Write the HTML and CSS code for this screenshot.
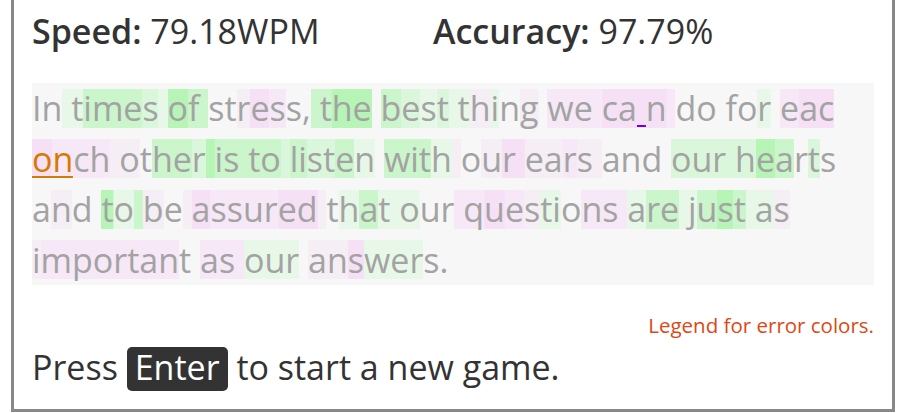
FILE: index.html
```html
<!DOCTYPE html>
<html lang="en">
<head>
<meta charset="utf-8">
<title>Typing game</title>
<link rel="stylesheet" href="styles.css">
</head>
<body>
<div class="game">
  <div class="stats">
    <div class="stat"><b>Speed:</b> 79.18WPM</div>
    <div class="stat"><b>Accuracy:</b> 97.79%</div>
  </div>
  <div class="passage">
<div class="ln">In<span class="g0"> t</span><span class="g2">ime</span><span class="g1">s</span><span class="g0"> </span><span class="g3">o</span><span class="g2">f </span>st<span class="p0">r</span><span class="p2">e</span><span class="p1">s</span>s,<span class="g2"> t</span><span class="g3">he</span> <span class="g2">b</span><span class="g1">e</span><span class="g0">s</span><span class="g1">t</span><span class="g0"> t</span><span class="p0">h</span><span class="g0">i</span>n<span class="p0">g</span> <span class="p1">we </span><span class="p2">ca</span><span class="p2 cur"> </span><span class="p2">n</span><span class="p1"> </span>do fo<span class="g0">r</span> <span class="p1">e</span><span class="p2">ac</span></div>
<div class="ln"><span class="p2 ex">o</span><span class="p1 ex">n</span><span class="p1">ch</span><span class="p0"> o</span>t<span class="g2">he</span><span class="g1">r</span><span class="g3"> </span><span class="g2">is to</span><span class="g1"> </span><span class="g2">li</span><span class="g1">st</span><span class="g2">e</span><span class="g0">n</span> <span class="g2">wit</span><span class="g0">h</span><span class="p0"> </span>o<span class="p0">u</span><span class="p2">r </span><span class="p0">ea</span><span class="p1">r</span><span class="p0">s </span>and <span class="g1">our h</span><span class="g3">e</span><span class="g2">a</span>r<span class="g1">t</span>s</div>
<div class="ln">a<span class="p0">n</span>d <span class="g3">t</span><span class="g0">o</span><span class="g2"> </span><span class="p0">b</span>e<span class="p0"> </span><span class="p2">a</span><span class="p1">ssur</span><span class="p2">ed</span><span class="p0"> </span>t<span class="g0">h</span><span class="g2">a</span><span class="g0">t o</span>ur<span class="p1"> q</span><span class="p2">u</span><span class="p1">e</span><span class="p0">s</span><span class="g0">ti</span>o<span class="p1">ns </span><span class="g0">a</span><span class="g2">re</span><span class="g0"> j</span><span class="g2">u</span><span class="g3">s</span><span class="g2">t</span><span class="g0"> a</span><span class="p0">s</span></div>
<div class="ln"><span class="p0">i</span><span class="p1">mportan</span>t <span class="p1">as </span><span class="g0">our</span> <span class="p0">an</span><span class="p2">s</span><span class="g0">wer</span>s.</div>
  </div>
  <div class="legend">Legend for error colors.</div>
  <div class="restart">Press <kbd class="key">Enter</kbd> to start a new game.</div>
</div>
</body>
</html>
```
FILE: styles.css
```css
body {
  margin: 0;
  background: #fff;
  font-family: "Open Sans", "Noto Sans", sans-serif;
}

.game {
  margin-left: 11px;
  width: 884px;
  box-sizing: border-box;
  border: 3px solid #888;
  border-top: none;
  padding: 10px 18px 17px;
  color: #333;
}

.stats {
  display: grid;
  grid-template-columns: 401px auto;
  font-size: 34px;
  line-height: 42px;
}

.stat b {
  font-weight: 600;
}

.passage {
  margin-top: 31px;
  background: #f7f7f7;
  color: #a3a3a3;
  font-size: 34px;
}

.ln {
  height: 50.5px;
  line-height: 50.5px;
  white-space: pre;
}

.g0, .g1, .g2, .g3, .p0, .p1, .p2 {
  background-image: linear-gradient(var(--c), var(--c));
  background-size: 100% 39px;
  background-position: center;
  background-repeat: no-repeat;
}

.g0 { --c: #e8f8e8; }
.g1 { --c: #dbf7db; }
.g2 { --c: #cbf5cb; }
.g3 { --c: #b6f5b6; }
.p0 { --c: #f5eef5; }
.p1 { --c: #f6e8f6; }
.p2 { --c: #f6e0f6; }

.ex {
  --u: #d67a00;
  color: #d67a00;
}

.cur {
  --u: #6200ff;
}

.ex, .cur {
  background-image:
    linear-gradient(transparent calc(50% + 17px), var(--u) 0, var(--u) calc(50% + 19.5px), transparent 0),
    linear-gradient(var(--c), var(--c));
  background-size: 100% 100%, 100% 39px;
}

.legend {
  margin-top: 28px;
  text-align: right;
  font-size: 20.5px;
  line-height: 24px;
  color: #dd4814;
}

.restart {
  margin-top: 5px;
  font-size: 34px;
  line-height: 50px;
}

.key {
  display: inline-block;
  font-family: inherit;
  font-size: inherit;
  line-height: 40px;
  padding: 0 8px 4px;
  border-radius: 5px;
  background: #333;
  color: #fff;
}
```
